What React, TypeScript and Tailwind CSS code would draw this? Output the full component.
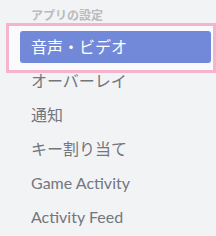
import React from "react";

const items = ["音声・ビデオ", "オーバーレイ", "通知", "キー割り当て", "Game Activity", "Activity Feed"];

export default function App() {
  return (
    <div
      className="relative w-[216px] h-[236px] overflow-hidden bg-[#f2f3f5] pt-[9px]"
      style={{ fontFamily: 'Lato, "Noto Sans CJK JP", sans-serif' }}
    >
      {/* highlight box */}
      <div className="absolute left-[6px] top-[23px] w-[210px] h-[50px] border-[3px] border-[#f6b3cd] bg-[#fafafb]" />

      <div className="relative pl-[31px] pr-[6px] text-[12px] leading-[14px] font-bold text-[#b9bbbe] h-[22px]">
        アプリの設定
      </div>
      <div className="relative flex flex-col gap-[2px] pl-[20px] pr-[5px]">
        {items.map((item, i) => (
          <div
            key={item}
            className={`h-[32px] flex items-center px-[11px] rounded-[3px] text-[16px] font-normal ${
              i === 0 ? "bg-[#7289da] text-white" : "text-[#72767d]"
            }`}
          >
            {item}
          </div>
        ))}
      </div>
    </div>
  );
}
